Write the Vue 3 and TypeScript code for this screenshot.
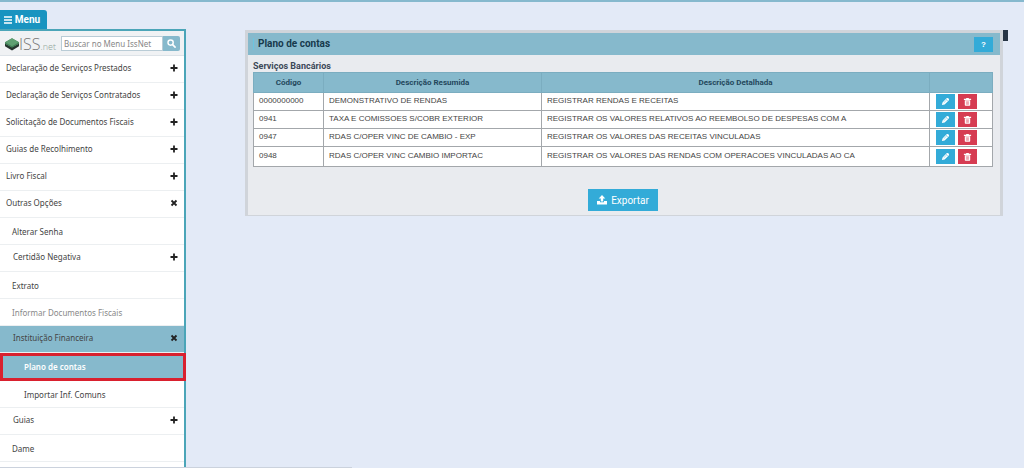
<script setup lang="ts">
import { ref } from 'vue'

interface MenuItem {
  label: string
  level: number
  mark?: 'plus' | 'close'
  state?: 'muted' | 'open' | 'current'
}

interface Account {
  code: string
  summary: string
  detail: string
}

const search = ref('')

const menu: MenuItem[] = [
  { label: 'Declaração de Serviços Prestados', level: 0, mark: 'plus' },
  { label: 'Declaração de Serviços Contratados', level: 0, mark: 'plus' },
  { label: 'Solicitação de Documentos Fiscais', level: 0, mark: 'plus' },
  { label: 'Guias de Recolhimento', level: 0, mark: 'plus' },
  { label: 'Livro Fiscal', level: 0, mark: 'plus' },
  { label: 'Outras Opções', level: 0, mark: 'close' },
  { label: 'Alterar Senha', level: 1 },
  { label: 'Certidão Negativa', level: 1, mark: 'plus' },
  { label: 'Extrato', level: 1 },
  { label: 'Informar Documentos Fiscais', level: 1, state: 'muted' },
  { label: 'Instituição Financeira', level: 1, mark: 'close', state: 'open' },
  { label: 'Plano de contas', level: 2, state: 'current' },
  { label: 'Importar Inf. Comuns', level: 2 },
  { label: 'Guias', level: 1, mark: 'plus' },
  { label: 'Dame', level: 1 },
]

const accounts: Account[] = [
  { code: '0000000000', summary: 'DEMONSTRATIVO DE RENDAS', detail: 'REGISTRAR RENDAS E RECEITAS' },
  { code: '0941', summary: 'TAXA E COMISSOES S/COBR EXTERIOR', detail: 'REGISTRAR OS VALORES RELATIVOS AO REEMBOLSO DE DESPESAS COM A' },
  { code: '0947', summary: 'RDAS C/OPER VINC DE CAMBIO - EXP', detail: 'REGISTRAR OS VALORES DAS RECEITAS VINCULADAS' },
  { code: '0948', summary: 'RDAS C/OPER VINC CAMBIO IMPORTAC', detail: 'REGISTRAR OS VALORES DAS RENDAS COM OPERACOES VINCULADAS AO CA' },
]
</script>

<template>
  <div class="page">
    <div class="side">
      <button class="menu-button" type="button">
        <svg viewBox="0 0 8 8" aria-hidden="true"><path d="M0 1h8M0 4h8M0 7h8" stroke="#fff" stroke-width="1.5" /></svg>
        Menu
      </button>
      <nav class="sidebar" aria-label="Menu">
        <form class="brand-row" @submit.prevent>
          <div class="brand">
            <svg viewBox="0 0 12 12" aria-hidden="true">
              <path d="M0 5.500l6 3 6-3v2.500l-6 3.500L0 8z" fill="#26352f" />
              <path d="M0 4.500L6 1l6 3.500v1.300L6 9.300 0 5.800z" fill="#3f7d55" />
              <path d="M0 4.500L6 1l6 3.500L6 8z" fill="#5fa072" />
            </svg>
            <span class="iss">ISS</span><span class="net">.net</span>
          </div>
          <div class="search">
            <input v-model="search" type="text" placeholder="Buscar no Menu IssNet" aria-label="Buscar no Menu IssNet" />
            <button type="submit" aria-label="Buscar">
              <svg viewBox="0 0 10 10" aria-hidden="true"><circle cx="4" cy="4" r="2.900" fill="none" stroke="#fff" stroke-width="1.600" /><path d="M6.200 6.200L9 9" stroke="#fff" stroke-width="1.800" stroke-linecap="round" /></svg>
            </button>
          </div>
        </form>
        <ul>
          <li v-for="item in menu" :key="item.label">
            <a href="#" :class="['level' + item.level, item.state, { group: item.mark }]">
              <span>{{ item.label }}</span>
              <svg v-if="item.mark" viewBox="0 0 8 8" aria-hidden="true">
                <path v-if="item.mark === 'plus'" d="M4 .5v7M.5 4h7" stroke="#222" stroke-width="1.800" />
                <path v-else d="M1.500 1.500l5 5M6.500 1.500l-5 5" stroke="#222" stroke-width="1.800" />
              </svg>
            </a>
          </li>
        </ul>
      </nav>
    </div>

    <main>
      <section class="panel">
        <header>
          <h1>Plano de contas</h1>
          <button class="help" type="button" aria-label="Ajuda">?</button>
        </header>
        <div class="body">
          <table>
            <caption>Serviços Bancários</caption>
            <colgroup><col class="c-code" /><col class="c-summary" /><col /><col class="c-actions" /></colgroup>
            <thead>
              <tr><th>Código</th><th>Descrição Resumida</th><th>Descrição Detalhada</th><th></th></tr>
            </thead>
            <tbody>
              <tr v-for="account in accounts" :key="account.code">
                <td>{{ account.code }}</td>
                <td>{{ account.summary }}</td>
                <td>{{ account.detail }}</td>
                <td>
                  <div class="actions">
                    <button class="edit" type="button" aria-label="Editar">
                      <svg viewBox="0 0 10 10" aria-hidden="true"><path d="M1 9l.7-3L6.200 1.500q1-.9 1.900 0l.5.500q.8.900 0 1.800L4 8.300z" fill="#fff" /><path d="M3 6.500l3.600-3.600M5.600 2.400l2 2" stroke="#3bacd8" stroke-width=".5" /></svg>
                    </button>
                    <button class="remove" type="button" aria-label="Excluir">
                      <svg viewBox="0 0 10 10" aria-hidden="true"><path d="M3.500 2V1h3v1H9v1.200H1V2zM2 3.700h6V9q0 .7-.7.700H2.700Q2 9.700 2 9z" fill="#fff" /><path d="M3.800 4.700v4M5 4.700v4M6.200 4.700v4" stroke="#d63c52" stroke-width=".5" /></svg>
                    </button>
                  </div>
                </td>
              </tr>
            </tbody>
          </table>
          <button class="export" type="button">
            <svg viewBox="0 0 10 10" aria-hidden="true"><path d="M5 0l3.300 3.500H6.200V6.500H3.800V3.500H1.700z" fill="#fff" /><path d="M0 6h3v1.300h4V6h3v3.500H0z" fill="#fff" /></svg>
            Exportar
          </button>
        </div>
      </section>
      <span class="thumb"></span>
    </main>
    <div class="status"></div>
  </div>
</template>

<style>
body {
  margin: 0;
  background: #e3eaf7;
}
</style>

<style scoped>
.page {
  position: relative;
  box-sizing: border-box;
  display: flex;
  min-height: 100vh;
  border-top: 2px solid #86b9ce;
  background: #e3eaf7;
  font-family: "Liberation Sans", Arial, sans-serif;
}
button {
  margin: 0;
  padding: 0;
  border: 0;
  color: #fff;
  font-family: inherit;
  display: flex;
  align-items: center;
  justify-content: center;
}
.side {
  flex: none;
  width: 186px;
  display: flex;
  flex-direction: column;
  padding-top: 8px;
}
.menu-button {
  width: 47px;
  height: 19px;
  padding-right: 3px;
  gap: 3px;
  border-radius: 0 3px 0 0;
  background: #1994c0;
  font: bold 10px Roboto, sans-serif;
}
.menu-button svg {
  flex: none;
  width: 8px;
  height: 8px;
}
.sidebar {
  flex: 1;
  border: solid #4ba5b8;
  border-width: 2px 2px 0 0;
  background: #fff;
  font-family: "Noto Sans", sans-serif;
}
.brand-row {
  display: flex;
  align-items: center;
  justify-content: space-between;
  height: 23px;
  padding: 1px 4px 0 5px;
  background: #f0f2f4;
  border-bottom: 1px solid #dde3e8;
}
.brand {
  display: flex;
  align-items: baseline;
  font-family: "Open Sans", sans-serif;
  font-weight: 300;
  color: #777;
}
.brand svg {
  width: 14px;
  height: 14px;
  align-self: center;
}
.iss {
  font-size: 16px;
  line-height: 20px;
}
.net {
  font-size: 9px;
  color: #8fa598;
}
.search {
  display: flex;
  height: 15px;
}
.search input {
  box-sizing: border-box;
  width: 102px;
  margin: 0;
  padding: 0 2px;
  border: 1px solid #b9ccd6;
  background: #fff;
  color: #555;
  font: 8px "Noto Sans", sans-serif;
}
.search input::placeholder {
  color: #888;
  opacity: 1;
}
.search button {
  width: 17px;
  border-radius: 0 2px 2px 0;
  background: #86b9cc;
}
.search button svg {
  width: 9px;
  height: 9px;
}
ul {
  margin: 0;
  padding: 0;
  list-style: none;
}
li a {
  box-sizing: border-box;
  display: flex;
  align-items: center;
  justify-content: space-between;
  height: 27px;
  padding: 1px 6px 0 12px;
  border-bottom: 1px solid #eceff1;
  color: #444;
  font-size: 8px;
  text-decoration: none;
}
li a svg {
  width: 8px;
  height: 8px;
}
li .group {
  padding: 0 6px 3px 13px;
}
li .group.level0 {
  padding-left: 6px;
}
li .level2 {
  padding-left: 24px;
}
li .muted {
  color: #888;
}
li .open {
  background: #86b9cc;
}
li .current {
  height: 28px;
  margin-right: -2px;
  padding: 0 0 2px 21px;
  border: 3px solid #d9202e;
  background: #86b9cc;
  color: #fff;
  font-weight: 600;
}
main {
  flex: 1;
  min-width: 0;
  display: flex;
  align-items: flex-start;
  padding: 28px 16px 0 59px;
}
.panel {
  flex: 1;
  min-width: 0;
  border: solid #d0d4da;
  border-width: 3px 3px 1px 3px;
  background: #e9ebef;
}
.panel header {
  display: flex;
  align-items: center;
  justify-content: space-between;
  height: 22px;
  padding: 0 7px 0 5px;
  background: #86b9cc;
}
h1 {
  margin: 0;
  padding-left: 4px;
  border-left: 1px solid #6cc5e0;
  color: #173a4c;
  font: bold 10px/12px Roboto, sans-serif;
}
.help {
  width: 19px;
  height: 15px;
  background: #33abd8;
  font-size: 8px;
  font-weight: bold;
}
.body {
  display: flex;
  flex-direction: column;
  align-items: center;
  padding: 6px 7px 4px 5px;
}
table {
  width: 100%;
  table-layout: fixed;
  border-collapse: collapse;
  background: #fff;
  color: #444;
  font-size: 8px;
}
caption {
  color: #3c4858;
  font: bold 9px/11px Roboto, sans-serif;
  text-align: left;
}
.c-code {
  width: 70px;
}
.c-summary {
  width: 218px;
}
.c-actions {
  width: 63px;
}
th,
td {
  box-sizing: border-box;
  height: 18px;
  padding: 0 5px 2px;
  border: 1px solid #a3a7ab;
  text-align: left;
}
td:last-child {
  padding: 0 6px;
}
tbody tr:last-child td {
  height: 20px;
}
th {
  height: 20px;
  padding-bottom: 0;
  border-color: #7badc0;
  background: #86b9cc;
  color: #24485c;
  font: bold 8px Roboto, sans-serif;
  text-align: center;
}
.actions {
  display: flex;
  gap: 3px;
}
.actions button {
  width: 19px;
  height: 15px;
}
.actions svg {
  width: 9px;
  height: 9px;
}
.edit {
  background: #33abd8;
}
.remove {
  background: #d63c52;
}
.export {
  width: 70px;
  height: 22px;
  margin-top: 22px;
  gap: 4px;
  background: #33abd8;
  font: 10px Roboto, sans-serif;
}
.export svg {
  width: 10px;
  height: 10px;
}
.thumb {
  width: 5px;
  height: 11px;
  background: #263445;
}
.status {
  position: absolute;
  left: 0;
  bottom: 0;
  width: 352px;
  height: 1px;
  background: #cbd2dd;
}
</style>
